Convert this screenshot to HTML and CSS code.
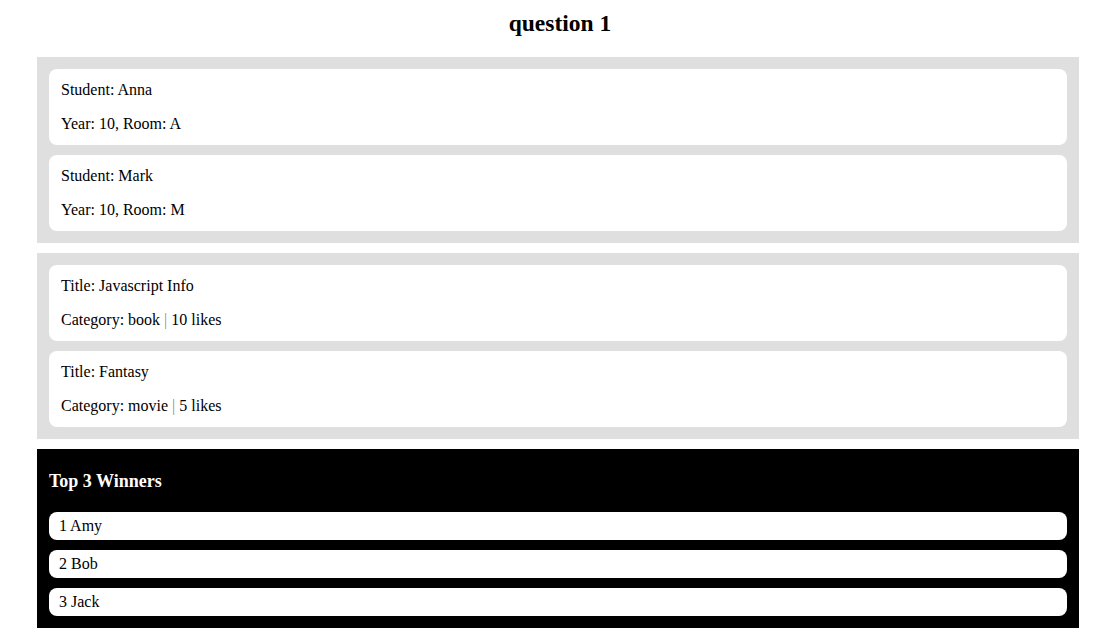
FILE: index.html
```html
<!DOCTYPE html>
<html lang="en">
<head>
<meta charset="utf-8">
<title>question 1</title>
<link rel="stylesheet" href="styles.css">
</head>
<body>
<h2 class="title">question 1</h2>
<main class="page">
  <section class="panel">
    <div class="card">
      <p>Student: Anna</p>
      <p>Year: 10, Room: A</p>
    </div>
    <div class="card">
      <p>Student: Mark</p>
      <p>Year: 10, Room: M</p>
    </div>
  </section>
  <section class="panel">
    <div class="card">
      <p>Title: Javascript Info</p>
      <p>Category: book <span class="sep">|</span> 10 likes</p>
    </div>
    <div class="card">
      <p>Title: Fantasy</p>
      <p>Category: movie <span class="sep">|</span> 5 likes</p>
    </div>
  </section>
  <section class="winners">
    <h3 class="winners-title">Top 3 Winners</h3>
    <ul class="winner-list">
      <li class="winner">1 Amy</li>
      <li class="winner">2 Bob</li>
      <li class="winner">3 Jack</li>
    </ul>
  </section>
</main>
</body>
</html>
```

FILE: styles.css
```css
html, body {
  background: #ffffff;
}
body {
  margin: 8px;
  font-family: "Liberation Serif", "Times New Roman", serif;
  font-size: 16px;
  color: #000000;
}
.title {
  margin: 1px 0 20px;
  font-size: 23.5px;
  line-height: 28px;
  font-weight: bold;
  text-align: center;
}
.page {
  display: flex;
  flex-direction: column;
  gap: 10px;
  padding: 0 33px 0 29px;
}
.panel {
  background: #dfdfdf;
  padding: 12px;
  display: flex;
  flex-direction: column;
  gap: 10px;
}
.card {
  background: #ffffff;
  border-radius: 8px;
  padding: 12px;
  display: flex;
  flex-direction: column;
  gap: 16px;
}
.card p {
  margin: 0;
  line-height: 18px;
}
.sep {
  color: #a08c78;
}
.winners {
  background: #000000;
  padding: 12px;
}
.winners-title {
  margin: 10px 0 20px;
  color: #ffffff;
  font-size: 18px;
  line-height: 21px;
  font-weight: bold;
}
.winner-list {
  list-style: none;
  margin: 0;
  padding: 0;
  display: flex;
  flex-direction: column;
  gap: 10px;
}
.winner {
  background: #ffffff;
  border-radius: 8px;
  padding: 5px 10px;
  line-height: 18px;
}
```
